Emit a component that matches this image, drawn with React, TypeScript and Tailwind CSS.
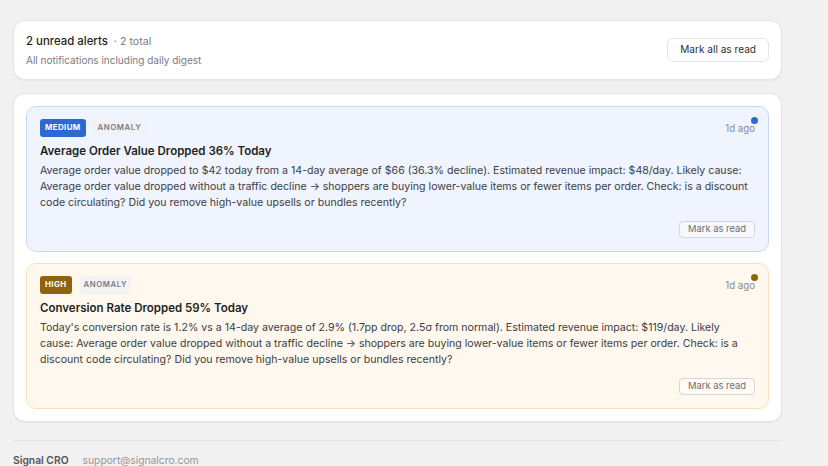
import React from 'react';

interface Alert {
    id: string;
    severity: 'medium' | 'high';
    type: string;
    title: string;
    body: string;
    age: string;
}

const alerts: Alert[] = [
    {
        id: 'aov',
        severity: 'medium',
        type: 'Anomaly',
        title: 'Average Order Value Dropped 36% Today',
        body: 'Average order value dropped to $42 today from a 14-day average of $66 (36.3% decline). Estimated revenue impact: $48/day. Likely cause: Average order value dropped without a traffic decline → shoppers are buying lower-value items or fewer items per order. Check: is a discount code circulating? Did you remove high-value upsells or bundles recently?',
        age: '1d ago',
    },
    {
        id: 'cr',
        severity: 'high',
        type: 'Anomaly',
        title: 'Conversion Rate Dropped 59% Today',
        body: "Today's conversion rate is 1.2% vs a 14-day average of 2.9% (1.7pp drop, 2.5σ from normal). Estimated revenue impact: $119/day. Likely cause: Average order value dropped without a traffic decline → shoppers are buying lower-value items or fewer items per order. Check: is a discount code circulating? Did you remove high-value upsells or bundles recently?",
        age: '1d ago',
    },
];

const styles = {
    medium: {
        card: 'bg-[#eff4fe] border-[#c9d8f6]',
        badge: 'bg-[#2b6bd1]',
        dot: 'bg-[#2b6bd1]',
    },
    high: {
        card: 'bg-[#fef8ee] border-[#f8e0b8]',
        badge: 'bg-[#8f6410]',
        dot: 'bg-[#8f6410]',
    },
};

function AlertCard({ alert }: { alert: Alert }) {
    const s = styles[alert.severity];
    return (
        <div className={`relative rounded-[10px] border px-[13px] pt-[12px] pb-[13px] ${s.card}`}>
            <span className={`absolute top-[10px] right-[10px] w-[7px] h-[7px] rounded-full ${s.dot}`}></span>
            <div className="flex items-center justify-between">
                <div className="flex items-center gap-[8px]">
                    <span className={`h-[18px] px-[5px] flex items-center rounded-[3px] text-white text-[7.9px] font-bold tracking-[0.05em] uppercase ${s.badge}`}>
                        {alert.severity}
                    </span>
                    <span className="h-[18px] px-[4px] flex items-center rounded-[3px] bg-[#f1f1f4]/80 text-[#7b7b80] text-[7.8px] font-semibold tracking-[0.07em] uppercase">
                        {alert.type}
                    </span>
                </div>
                <span className="text-[9.7px] text-[#8a8a8f] mt-[3px]">{alert.age}</span>
            </div>
            <h3 className="mt-[6px] text-[11.5px] leading-[16px] font-semibold text-[#1f1f23]">{alert.title}</h3>
            <p className="mt-[4px] text-[10.6px] leading-[16px] text-[#3d3d42]">{alert.body}</p>
            <div className="flex justify-end mt-[10px]">
                <button className="h-[17px] px-[8px] rounded-[4px] border border-[#d6d6da] bg-white/40 text-[9.4px] text-[#6e6e73]">
                    Mark as read
                </button>
            </div>
        </div>
    );
}

export default function App() {
    return (
        <div className="min-h-screen bg-[#f1f1f1] px-[13px] pt-[20px] font-['Inter',sans-serif]">
            <div className="w-[769px] flex flex-col gap-[13px]">
                <div className="bg-white rounded-[12px] border border-[#e4e4e4] shadow-[0_1px_1px_rgba(0,0,0,0.05)] h-[60px] px-[12px] flex items-center justify-between">
                    <div>
                        <div className="flex items-baseline gap-[6px] leading-[16px]">
                            <span className="text-[11.4px] font-medium text-[#1f1f23]">2 unread alerts</span>
                            <span className="text-[10.7px] text-[#7b7b80]">· 2 total</span>
                        </div>
                        <p className="mt-[3px] text-[10px] leading-[14px] text-[#7b7b80]">All notifications including daily digest</p>
                    </div>
                    <button className="h-[24px] px-[12px] rounded-[6px] border border-[#e6e6e8] bg-white text-[10.1px] text-[#303035]">
                        Mark all as read
                    </button>
                </div>

                <div className="bg-white rounded-[12px] border border-[#e4e4e4] shadow-[0_1px_1px_rgba(0,0,0,0.05)] p-[12px] flex flex-col gap-[11px]">
                    {alerts.map((a) => (
                        <AlertCard key={a.id} alert={a} />
                    ))}
                </div>

                <footer className="mt-[5px] border-t border-[#e3e3e6] pt-[12px] flex items-center gap-[14px] text-[10.3px] leading-[14px]">
                    <span className="font-semibold text-[#55555a]">Signal CRO</span>
                    <span className="text-[#96969b]">support@signalcro.com</span>
                </footer>
            </div>
        </div>
    );
}
